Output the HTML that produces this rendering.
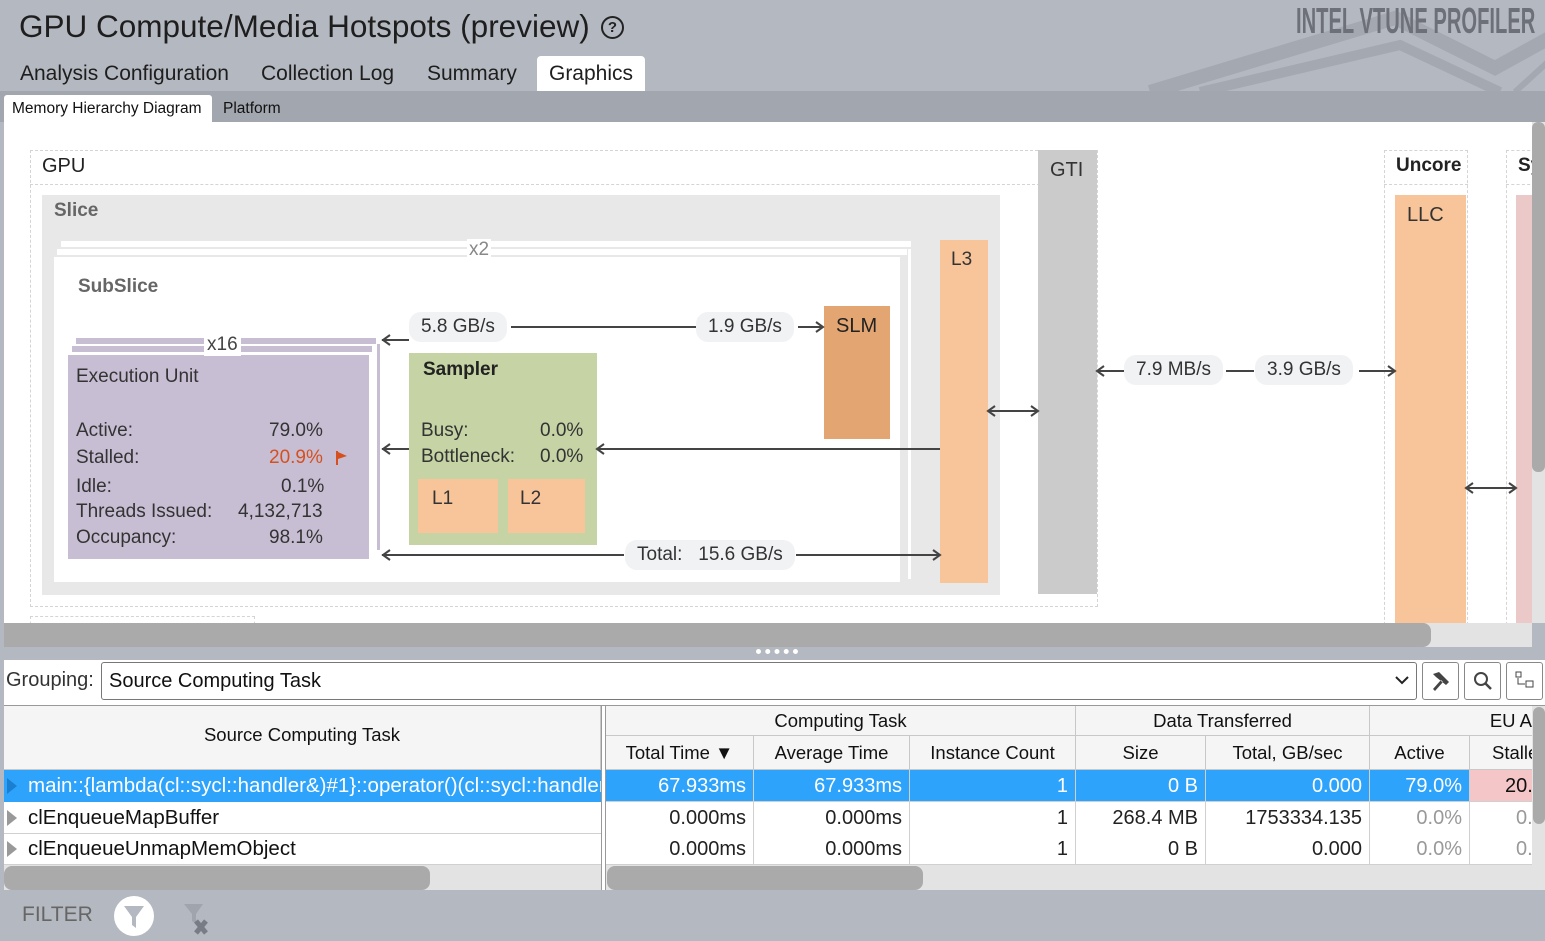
<!DOCTYPE html>
<html><head><meta charset="utf-8"><style>
*{margin:0;padding:0;box-sizing:border-box}
body{width:1545px;height:941px;overflow:hidden;background:#b4b8c0;font-family:"Liberation Sans",Arial,sans-serif;position:relative;color:#222}
.a{position:absolute}
.pill{position:absolute;background:#f1f2f4;border-radius:12px;font-size:19px;color:#333;padding:0 12px;height:30px;line-height:30px}
.dash{position:absolute;border:1.5px dashed #d4d4d4}
.t{position:absolute;font-size:19px;color:#333}
.cell{position:absolute;font-size:20px;text-align:right;padding-right:7px;height:32px;line-height:32px;border-right:1px solid #d0d0d0;border-bottom:1px solid #d0d0d0}
.hd{position:absolute;font-size:18.5px;text-align:center;background:#f5f5f5;border-right:1px solid #c8c8c8;border-bottom:1px solid #c8c8c8;color:#111}
</style></head><body>
<!-- header -->
<div class="a" style="left:19px;top:8px;font-size:31.5px;color:#1e1e1e;white-space:nowrap">GPU Compute/Media Hotspots (preview)</div>
<div class="a" style="left:601px;top:16px;width:23px;height:23px;border:2px solid #222;border-radius:50%;font-size:15px;text-align:center;line-height:19px;font-weight:bold">?</div>
<svg class="a" style="left:1140px;top:0" width="405" height="92"><polyline points="10,92 255,18 355,68 460,10" fill="none" stroke="#a4a8b0" stroke-width="14"/><polyline points="60,92 260,45 360,92" fill="none" stroke="#a4a8b0" stroke-width="10"/><line x1="375" y1="92" x2="445" y2="28" stroke="#a4a8b0" stroke-width="6"/></svg>
<div class="a" style="left:1296px;top:0px;font-size:36px;font-weight:bold;color:#6d7079;transform:scaleX(0.56);transform-origin:left top;font-family:'Liberation Sans',sans-serif;white-space:nowrap">INTEL VTUNE PROFILER</div>
<div class="a" style="left:20px;top:62px;font-size:21px;color:#1e1e1e">Analysis Configuration</div>
<div class="a" style="left:261px;top:62px;font-size:21px;color:#1e1e1e">Collection Log</div>
<div class="a" style="left:427px;top:62px;font-size:21px;color:#1e1e1e">Summary</div>
<div class="a" style="left:537px;top:56px;width:108px;height:36px;background:#fff;border-radius:4px 4px 0 0;font-size:21px;text-align:center;line-height:36px;color:#1e1e1e">Graphics</div>
<div class="a" style="left:0;top:91px;width:1545px;height:31px;background:#a2a6ae"></div>
<div class="a" style="left:4px;top:95px;width:208px;height:27px;background:#fff;border-radius:3px 3px 0 0;font-size:15.5px;line-height:28px;padding-left:8px;color:#111;white-space:nowrap">Memory Hierarchy Diagram</div>
<div class="a" style="left:223px;top:100px;font-size:15.5px;color:#111">Platform</div>
<!-- diagram -->
<div class="a" style="left:4px;top:122px;width:1528px;height:501px;background:#fff;overflow:hidden">
 <div class="dash" style="left:26px;top:28px;width:1068px;height:457px"></div>
 <div class="a" style="left:26px;top:62px;width:1010px;border-top:1.5px dashed #d4d4d4"></div>
 <div class="t" style="left:38px;top:33px;font-size:20px;color:#222">GPU</div>
 <div class="dash" style="left:26px;top:494px;width:225px;height:20px"></div>
 <div class="a" style="left:38px;top:73px;width:958px;height:400px;background:#e8e8e8"></div>
 <div class="t" style="left:50px;top:78px;font-weight:bold;color:#666">Slice</div>
 <div class="a" style="left:57px;top:119px;width:850px;height:6px;background:#fff"></div>
 <div class="a" style="left:53px;top:127px;width:850px;height:6px;background:#fff"></div>
 <div class="a" style="left:50px;top:135px;width:846px;height:325px;background:#fff"></div>
 <div class="a" style="left:904px;top:127px;width:3px;height:330px;background:#fff"></div>
 <div class="t" style="left:463px;top:117px;color:#888;background:#fff;padding:0 2px">x2</div>
 <div class="t" style="left:74px;top:154px;font-weight:bold;color:#666">SubSlice</div>
 <!-- EU -->
 <div class="a" style="left:72px;top:216px;width:300px;height:6px;background:#c8bed4"></div>
 <div class="a" style="left:68px;top:224px;width:300px;height:6px;background:#c8bed4"></div>
 <div class="a" style="left:373px;top:222px;width:3px;height:206px;background:#c8bed4"></div>
 <div class="a" style="left:64px;top:233px;width:301px;height:204px;background:#c8bed4"></div>
 <div class="t" style="left:200px;top:212px;color:#444;background:#fff;padding:0 3px">x16</div>
 <div class="t" style="left:72px;top:244px">Execution Unit</div>
 <div class="t" style="left:72px;top:298px">Active:</div><div class="t" style="left:265px;top:298px">79.0%</div>
 <div class="t" style="left:72px;top:325px">Stalled:</div><div class="t" style="left:265px;top:325px;color:#d5501e">20.9%</div>
 <svg class="a" style="left:331px;top:328px" width="14" height="16"><path d="M2 1V15" stroke="#d5501e" stroke-width="2"/><path d="M3 2L12 6L3 9Z" fill="#d5501e"/></svg>
 <div class="t" style="left:72px;top:354px">Idle:</div><div class="t" style="left:277px;top:354px">0.1%</div>
 <div class="t" style="left:72px;top:379px">Threads Issued:</div><div class="t" style="left:234px;top:379px">4,132,713</div>
 <div class="t" style="left:72px;top:405px">Occupancy:</div><div class="t" style="left:265px;top:405px">98.1%</div>
 <!-- sampler -->
 <div class="a" style="left:405px;top:231px;width:188px;height:192px;background:#c5d3a5"></div>
 <div class="t" style="left:419px;top:237px;font-weight:bold;color:#222">Sampler</div>
 <div class="t" style="left:417px;top:298px">Busy:</div><div class="t" style="left:536px;top:298px">0.0%</div>
 <div class="t" style="left:417px;top:324px">Bottleneck:</div><div class="t" style="left:536px;top:324px">0.0%</div>
 <div class="a" style="left:414px;top:357px;width:80px;height:54px;background:#f8c49a"></div>
 <div class="t" style="left:428px;top:366px">L1</div>
 <div class="a" style="left:504px;top:357px;width:77px;height:54px;background:#f8c49a"></div>
 <div class="t" style="left:516px;top:366px">L2</div>
 <!-- SLM, L3, GTI -->
 <div class="a" style="left:820px;top:184px;width:66px;height:133px;background:#e3a572"></div>
 <div class="t" style="left:832px;top:193px;font-size:20px;color:#222">SLM</div>
 <div class="a" style="left:936px;top:118px;width:48px;height:343px;background:#f8c49a"></div>
 <div class="t" style="left:947px;top:127px">L3</div>
 <div class="a" style="left:1034px;top:28px;width:59px;height:444px;background:#cbcbcb"></div>
 <div class="t" style="left:1046px;top:37px;font-size:20px;color:#333">GTI</div>
 <!-- Uncore -->
 <div class="dash" style="left:1380px;top:28px;width:84px;height:500px"></div>
 <div class="a" style="left:1380px;top:62px;width:84px;border-top:1.5px dashed #d4d4d4"></div>
 <div class="t" style="left:1392px;top:33px;font-weight:bold;color:#222">Uncore</div>
 <div class="a" style="left:1391px;top:73px;width:71px;height:430px;background:#f8c49a"></div>
 <div class="t" style="left:1403px;top:82px;font-size:20px">LLC</div>
 <div class="dash" style="left:1502px;top:28px;width:40px;height:500px"></div>
 <div class="a" style="left:1502px;top:62px;width:40px;border-top:1.5px dashed #d4d4d4"></div>
 <div class="t" style="left:1514px;top:33px;font-weight:bold;color:#222">Sy</div>
 <div class="a" style="left:1512px;top:73px;width:20px;height:430px;background:#ecc9c9"></div>
 <!-- arrows -->
 <svg class="a" style="left:0;top:0" width="1528" height="501" fill="none" stroke="#444" stroke-width="2">
  <path d="M378 218H405M386 213l-7 5 7 5"/>
  <path d="M507 205H692M794 205H818M812 200l7 5-7 5"/>
  <path d="M378 327H405M386 322l-7 5 7 5"/>
  <path d="M593 327H936M600 322l-7 5 7 5"/>
  <path d="M378 433H620M792 433H936M386 428l-7 5 7 5M929 428l7 5-7 5"/>
  <path d="M984 289H1034M991 284l-7 5 7 5M1027 284l7 5-7 5"/>
  <path d="M1093 249H1120M1222 249H1250M1355 249H1391M1100 244l-7 5 7 5M1384 244l7 5-7 5"/>
  <path d="M1462 366H1512M1469 361l-7 5 7 5M1505 361l7 5-7 5"/>
 </svg>
 <div class="pill" style="left:405px;top:190px">5.8 GB/s</div>
 <div class="pill" style="left:692px;top:190px">1.9 GB/s</div>
 <div class="pill" style="left:621px;top:418px">Total:&nbsp;&nbsp; 15.6 GB/s</div>
 <div class="pill" style="left:1120px;top:233px">7.9 MB/s</div>
 <div class="pill" style="left:1251px;top:233px">3.9 GB/s</div>
</div>
<div class="a" style="left:1532px;top:122px;width:13px;height:501px;background:#e3e3e3"></div>
<div class="a" style="left:1532px;top:122px;width:13px;height:350px;background:#aaa;border-radius:6px"></div>
<div class="a" style="left:4px;top:623px;width:1528px;height:24px;background:#e3e3e3"></div>
<div class="a" style="left:4px;top:623px;width:1427px;height:24px;background:#aaa;border-radius:0 8px 8px 0"></div>
<div class="a" style="left:756px;top:649px;width:42px;height:6px;border-top:5px dotted #fff"></div>
<!-- grouping -->
<div class="a" style="left:4px;top:660px;width:1541px;height:46px;background:#fff;border-bottom:1px solid #999"></div>
<div class="a" style="left:6px;top:669px;font-size:20px;color:#333">Grouping:</div>
<div class="a" style="left:101px;top:662px;width:1316px;height:38px;border:1px solid #777;border-radius:3px;font-size:20px;line-height:36px;padding-left:7px;color:#111">Source Computing Task</div>
<svg class="a" style="left:1394px;top:674px" width="16" height="12"><path d="M2 3l6 6 6-6" fill="none" stroke="#222" stroke-width="2"/></svg>
<div class="a" style="left:1422px;top:662px;width:37px;height:38px;border:1px solid #888;border-radius:3px"></div>
<svg class="a" style="left:1430px;top:670px" width="22" height="22"><path d="M3 4l6-2 10 10-3 3L6 7z M11 10l-8 9 2 2 8-9" fill="#444"/></svg>
<div class="a" style="left:1464px;top:662px;width:37px;height:38px;border:1px solid #888;border-radius:3px"></div>
<svg class="a" style="left:1472px;top:670px" width="22" height="22"><circle cx="9" cy="9" r="6" fill="none" stroke="#444" stroke-width="2"/><path d="M13 13l6 6" stroke="#444" stroke-width="2.5"/></svg>
<div class="a" style="left:1506px;top:662px;width:37px;height:38px;border:1px solid #888;border-radius:3px"></div>
<svg class="a" style="left:1514px;top:670px" width="22" height="22"><rect x="2" y="2" width="5" height="5" fill="none" stroke="#444"/><rect x="12" y="11" width="7" height="6" fill="none" stroke="#444"/><path d="M4 8v6h7" fill="none" stroke="#444"/></svg>
<!-- table -->
<div class="a" style="left:4px;top:706px;width:1528px;height:184px;background:#e3e3e3"></div>
<div class="hd" style="left:4px;top:706px;width:597px;height:64px;line-height:58px">Source Computing Task</div>
<div class="a" style="left:601px;top:706px;width:5px;height:184px;background:#fff;border-left:1px solid #999;border-right:1px solid #999"></div>
<div class="hd" style="left:606px;top:706px;width:470px;height:30px;line-height:29px">Computing Task</div>
<div class="hd" style="left:1076px;top:706px;width:294px;height:30px;line-height:29px">Data Transferred</div>
<div class="hd" style="left:1370px;top:706px;width:162px;height:30px;line-height:29px;text-align:right;padding-right:0;border-right:none">EU A</div>
<div class="hd" style="left:606px;top:736px;width:148px;height:34px;line-height:33px">Total Time ▼</div>
<div class="hd" style="left:754px;top:736px;width:156px;height:34px;line-height:33px">Average Time</div>
<div class="hd" style="left:910px;top:736px;width:166px;height:34px;line-height:33px">Instance Count</div>
<div class="hd" style="left:1076px;top:736px;width:130px;height:34px;line-height:33px">Size</div>
<div class="hd" style="left:1206px;top:736px;width:164px;height:34px;line-height:33px">Total, GB/sec</div>
<div class="hd" style="left:1370px;top:736px;width:100px;height:34px;line-height:33px">Active</div>
<div class="hd" style="left:1470px;top:736px;width:62px;height:34px;line-height:33px;text-align:left;padding-left:22px;border-right:none;overflow:hidden">Stalle</div>
<!-- rows -->
<div class="a" style="left:4px;top:770px;width:597px;height:32px;background:#2ea3fc"></div>
<div class="a" style="left:4px;top:802px;width:597px;height:63px;background:#fff"></div>
<div class="a" style="left:4px;top:833px;width:597px;height:1px;background:#d0d0d0"></div>
<div class="a" style="left:4px;top:864px;width:597px;height:1px;background:#d0d0d0"></div>
<svg class="a" style="left:7px;top:778px" width="12" height="80"><path d="M0 0l10 8-10 8z" fill="#1a7fd0"/><path d="M0 32l10 8-10 8z" fill="#999"/><path d="M0 63l10 8-10 8z" fill="#999"/></svg>
<div class="a" style="left:28px;top:774px;font-size:20.5px;color:#fff;white-space:nowrap;width:573px;overflow:hidden">main::{lambda(cl::sycl::handler&amp;)#1}::operator()(cl::sycl::handler&amp;)</div>
<div class="a" style="left:28px;top:806px;font-size:20.5px;color:#111">clEnqueueMapBuffer</div>
<div class="a" style="left:28px;top:837px;font-size:20.5px;color:#111">clEnqueueUnmapMemObject</div>

<div class="cell" style="left:606px;top:770px;width:148px;background:#2ea3fc;color:#fff">67.933ms</div>
<div class="cell" style="left:754px;top:770px;width:156px;background:#2ea3fc;color:#fff">67.933ms</div>
<div class="cell" style="left:910px;top:770px;width:166px;background:#2ea3fc;color:#fff">1</div>
<div class="cell" style="left:1076px;top:770px;width:130px;background:#2ea3fc;color:#fff">0 B</div>
<div class="cell" style="left:1206px;top:770px;width:164px;background:#2ea3fc;color:#fff">0.000</div>
<div class="cell" style="left:1370px;top:770px;width:100px;background:#2ea3fc;color:#fff">79.0%</div>
<div class="cell" style="left:1470px;top:770px;width:62px;background:#f5c6c8;color:#111;text-align:left;padding-left:35px;border-right:none;overflow:hidden">20.</div>

<div class="cell" style="left:606px;top:802px;width:148px;background:#fff">0.000ms</div>
<div class="cell" style="left:754px;top:802px;width:156px;background:#fff">0.000ms</div>
<div class="cell" style="left:910px;top:802px;width:166px;background:#fff">1</div>
<div class="cell" style="left:1076px;top:802px;width:130px;background:#fff">268.4 MB</div>
<div class="cell" style="left:1206px;top:802px;width:164px;background:#fff">1753334.135</div>
<div class="cell" style="left:1370px;top:802px;width:100px;background:#fff;color:#999">0.0%</div>
<div class="cell" style="left:1470px;top:802px;width:62px;background:#fff;color:#999;text-align:left;padding-left:46px;border-right:none;overflow:hidden">0.</div>

<div class="cell" style="left:606px;top:833px;width:148px;background:#fff">0.000ms</div>
<div class="cell" style="left:754px;top:833px;width:156px;background:#fff">0.000ms</div>
<div class="cell" style="left:910px;top:833px;width:166px;background:#fff">1</div>
<div class="cell" style="left:1076px;top:833px;width:130px;background:#fff">0 B</div>
<div class="cell" style="left:1206px;top:833px;width:164px;background:#fff">0.000</div>
<div class="cell" style="left:1370px;top:833px;width:100px;background:#fff;color:#999">0.0%</div>
<div class="cell" style="left:1470px;top:833px;width:62px;background:#fff;color:#999;text-align:left;padding-left:46px;border-right:none;overflow:hidden">0.</div>

<div class="a" style="left:1532px;top:706px;width:13px;height:184px;background:#e3e3e3"></div>
<div class="a" style="left:1533px;top:707px;width:12px;height:117px;background:#aaa;border-radius:6px"></div>
<div class="a" style="left:4px;top:866px;width:426px;height:24px;background:#aaa;border-radius:8px"></div>
<div class="a" style="left:607px;top:866px;width:316px;height:24px;background:#aaa;border-radius:8px"></div>
<!-- footer -->
<div class="a" style="left:22px;top:903px;font-size:21px;color:#666">FILTER</div>
<div class="a" style="left:114px;top:896px;width:40px;height:40px;border-radius:50%;background:#fff"></div>
<svg class="a" style="left:114px;top:896px" width="40" height="40"><path d="M10 10h20l-8 11v11l-4-3v-8z" fill="#b4b8c0"/></svg>
<svg class="a" style="left:182px;top:903px" width="40" height="36"><path d="M2 1h19l-7 10v10l-4-3v-7z" fill="#a0a4ac"/><path d="M14 18l10 12M24 18l-10 12" stroke="#787c84" stroke-width="5"/></svg>
</body></html>
